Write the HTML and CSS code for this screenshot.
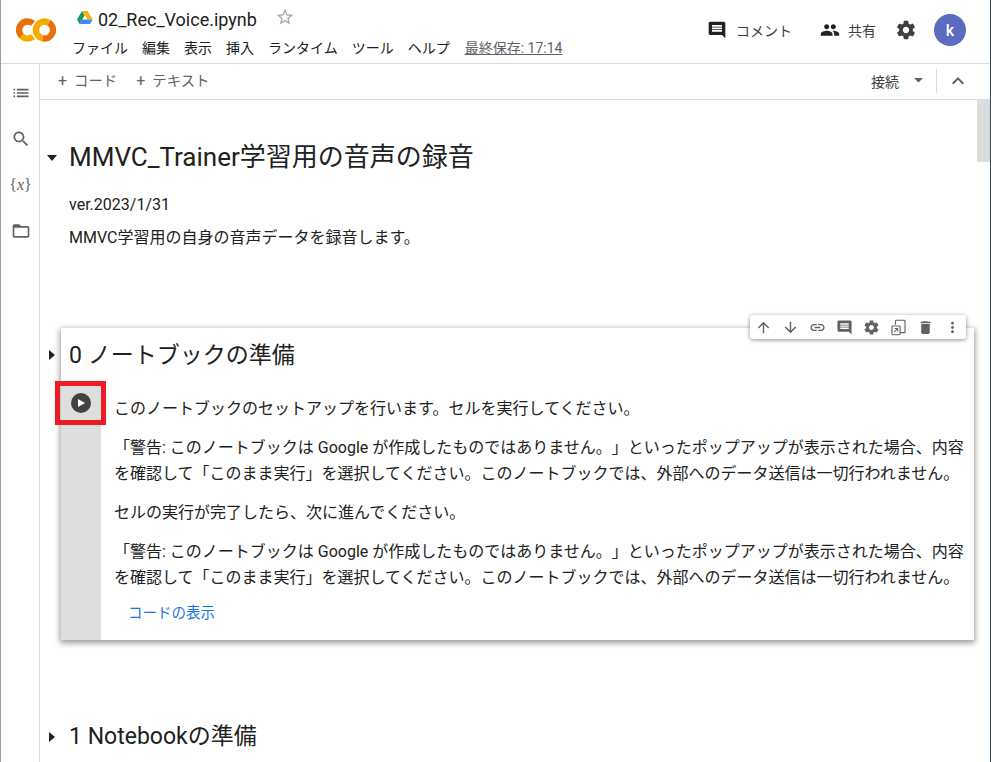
FILE: index.html
```html
<!DOCTYPE html>
<html lang="ja">
<head>
<meta charset="utf-8">
<title>02_Rec_Voice.ipynb</title>
<link rel="stylesheet" href="styles.css">
</head>
<body>
<div class="app">
  <header class="header">
    <svg class="logo" viewBox="0 0 40 24" aria-hidden="true">
      <path class="ring-y" d="M5.49 18.01A8.5 8.5 0 0 0 16.96 18.51"/>
      <path class="ring-o" d="M16.96 5.49A8.5 8.5 0 0 0 5.49 18.01"/>
      <path class="ring-o" d="M26.5 20.26A8.5 8.5 0 0 0 32.75 4.64"/>
      <path class="ring-y" d="M32.75 4.64A8.5 8.5 0 1 0 26.5 20.26"/>
    </svg>
    <div class="title-block">
      <div class="title-row">
        <svg class="drive" viewBox="0 0 16 14" aria-hidden="true">
          <path fill="#0f9d58" d="M0 9.6 5 1l2.6 4.4L2.6 14z"/>
          <path fill="#f4b400" d="M5 1h5.6l5 8.6h-5.2z"/>
          <path fill="#4285f4" d="M2.6 14l2.5-4.4h10.5L13 14z"/>
        </svg>
        <span class="filename">02_Rec_Voice.ipynb</span>
        <svg class="star" viewBox="0 0 24 24" aria-hidden="true"><path d="M22 9.24l-7.19-.62L12 2 9.19 8.63 2 9.24l5.46 4.73L5.82 21 12 17.27 18.18 21l-1.63-7.03L22 9.24zM12 15.4l-3.76 2.27 1-4.28-3.32-2.88 4.38-.38L12 6.1l1.71 4.04 4.38.38-3.32 2.88 1 4.28L12 15.4z"/></svg>
      </div>
      <nav class="menu">
        <span>ファイル</span><span>編集</span><span>表示</span><span>挿入</span><span>ランタイム</span><span>ツール</span><span>ヘルプ</span><span class="saved">最終保存: 17:14</span>
      </nav>
    </div>
    <div class="header-actions">
      <div class="action">
        <svg class="icon" viewBox="0 0 24 24" aria-hidden="true"><path d="M21.99 4c0-1.1-.89-2-1.99-2H4c-1.1 0-2 .9-2 2v12c0 1.1.9 2 2 2h14l4 4-.01-18zM18 14H6v-2h12v2zm0-3H6V9h12v2zm0-3H6V6h12v2z"/></svg>
        <span>コメント</span>
      </div>
      <div class="action share">
        <svg class="icon" viewBox="0 0 24 24" aria-hidden="true"><path d="M16 11c1.66 0 2.99-1.34 2.99-3S17.66 5 16 5c-1.66 0-3 1.34-3 3s1.34 3 3 3zm-8 0c1.66 0 2.99-1.34 2.99-3S9.66 5 8 5C6.34 5 5 6.34 5 8s1.34 3 3 3zm0 2c-2.33 0-7 1.17-7 3.5V19h14v-2.5c0-2.33-4.67-3.5-7-3.5zm8 0c-.29 0-.62.02-.97.05 1.16.84 1.97 1.97 1.97 3.45V19h6v-2.5c0-2.33-4.67-3.5-7-3.5z"/></svg>
        <span>共有</span>
      </div>
      <svg class="icon gear" viewBox="0 0 24 24" aria-hidden="true"><path d="M19.43 12.98c.04-.32.07-.64.07-.98s-.03-.66-.07-.98l2.11-1.65c.19-.15.24-.42.12-.64l-2-3.46c-.12-.22-.39-.3-.61-.22l-2.49 1c-.52-.4-1.08-.73-1.69-.98l-.38-2.65C14.46 2.18 14.25 2 14 2h-4c-.25 0-.46.18-.49.42l-.38 2.65c-.61.25-1.17.59-1.69.98l-2.49-1c-.23-.09-.49 0-.61.22l-2 3.46c-.13.22-.07.49.12.64l2.11 1.65c-.04.32-.07.65-.07.98s.03.66.07.98l-2.11 1.65c-.19.15-.24.42-.12.64l2 3.46c.12.22.39.3.61.22l2.49-1c.52.4 1.08.73 1.69.98l.38 2.65c.03.24.24.42.49.42h4c.25 0 .46-.18.49-.42l.38-2.65c.61-.25 1.17-.59 1.69-.98l2.49 1c.23.09.49 0 .61-.22l2-3.46c.12-.22.07-.49-.12-.64l-2.11-1.65zM12 15.5c-1.93 0-3.5-1.57-3.5-3.5s1.57-3.5 3.5-3.5 3.5 1.57 3.5 3.5-1.57 3.5-3.5 3.5z"/></svg>
      <div class="avatar">k</div>
    </div>
  </header>

  <div class="main">
    <aside class="rail">
      <svg class="rail-icon" viewBox="0 0 24 24" aria-hidden="true"><path d="M3 13h2v-2H3v2zm0 4h2v-2H3v2zm0-8h2V7H3v2zm4 4h14v-2H7v2zm0 4h14v-2H7v2zM7 7v2h14V7H7z"/></svg>
      <svg class="rail-icon" viewBox="0 0 24 24" aria-hidden="true"><path d="M15.5 14h-.79l-.28-.27C15.41 12.59 16 11.11 16 9.5 16 5.91 13.09 3 9.5 3S3 5.91 3 9.5 5.91 16 9.5 16c1.61 0 3.09-.59 4.23-1.57l.27.28v.79l5 4.99L20.49 19l-4.99-5zm-6 0C7.01 14 5 11.99 5 9.5S7.01 5 9.5 5 14 7.01 14 9.5 11.99 14 9.5 14z"/></svg>
      <span class="rail-var">{<i>x</i>}</span>
      <svg class="rail-icon" viewBox="0 0 24 24" aria-hidden="true"><path d="M20 6h-8l-2-2H4c-1.1 0-1.99.9-1.99 2L2 18c0 1.1.9 2 2 2h16c1.1 0 2-.9 2-2V8c0-1.1-.9-2-2-2zm0 12H4V8h16v10z"/></svg>
    </aside>

    <div class="workspace">
      <div class="toolbar">
        <span class="add"><b>+</b>コード</span>
        <span class="add"><b>+</b>テキスト</span>
        <div class="toolbar-right">
          <span class="connect">接続</span>
          <svg class="caret" viewBox="0 0 10 5" aria-hidden="true"><path d="M0 0h10L5 5z"/></svg>
          <span class="divider"></span>
          <svg class="chevron" viewBox="0 0 24 24" aria-hidden="true"><path d="M7.41 15.41 12 10.83l4.59 4.58L18 14l-6-6-6 6z"/></svg>
        </div>
      </div>

      <div class="scroller">
        <main class="notebook">
          <section class="intro">
            <h1 class="h1"><span class="tri-down"></span>MMVC_Trainer学習用の音声の録音</h1>
            <p class="intro-line">ver.2023/1/31</p>
            <p class="intro-line">MMVC学習用の自身の音声データを録音します。</p>
          </section>

          <div class="cell-wrap">
            <div class="cell-tools">
              <svg viewBox="0 0 24 24" aria-hidden="true"><path d="M4 12l1.41 1.41L11 7.83V20h2V7.83l5.58 5.59L20 12l-8-8-8 8z"/></svg>
              <svg viewBox="0 0 24 24" aria-hidden="true"><path d="M20 12l-1.41-1.41L13 16.17V4h-2v12.17l-5.58-5.59L4 12l8 8 8-8z"/></svg>
              <svg viewBox="0 0 24 24" aria-hidden="true"><path d="M3.9 12c0-1.71 1.39-3.1 3.1-3.1h4V7H7c-2.76 0-5 2.24-5 5s2.24 5 5 5h4v-1.9H7c-1.71 0-3.1-1.39-3.1-3.1zM8 13h8v-2H8v2zm9-6h-4v1.9h4c1.71 0 3.1 1.39 3.1 3.1s-1.39 3.1-3.1 3.1h-4V17h4c2.76 0 5-2.24 5-5s-2.24-5-5-5z"/></svg>
              <svg viewBox="0 0 24 24" aria-hidden="true"><path d="M21.99 4c0-1.1-.89-2-1.99-2H4c-1.1 0-2 .9-2 2v12c0 1.1.9 2 2 2h14l4 4-.01-18zM18 14H6v-2h12v2zm0-3H6V9h12v2zm0-3H6V6h12v2z"/></svg>
              <svg viewBox="0 0 24 24" aria-hidden="true"><path d="M19.43 12.98c.04-.32.07-.64.07-.98s-.03-.66-.07-.98l2.11-1.65c.19-.15.24-.42.12-.64l-2-3.46c-.12-.22-.39-.3-.61-.22l-2.49 1c-.52-.4-1.08-.73-1.69-.98l-.38-2.65C14.46 2.18 14.25 2 14 2h-4c-.25 0-.46.18-.49.42l-.38 2.65c-.61.25-1.17.59-1.69.98l-2.49-1c-.23-.09-.49 0-.61.22l-2 3.46c-.13.22-.07.49.12.64l2.11 1.65c-.04.32-.07.65-.07.98s.03.66.07.98l-2.11 1.65c-.19.15-.24.42-.12.64l2 3.46c.12.22.39.3.61.22l2.49-1c.52.4 1.08.73 1.69.98l.38 2.65c.03.24.24.42.49.42h4c.25 0 .46-.18.49-.42l.38-2.65c.61-.25 1.17-.59 1.69-.98l2.49 1c.23.09.49 0 .61-.22l2-3.46c.12-.22.07-.49-.12-.64l-2.11-1.65zM12 15.5c-1.93 0-3.5-1.57-3.5-3.5s1.57-3.5 3.5-3.5 3.5 1.57 3.5 3.5-1.57 3.5-3.5 3.5z"/></svg>
              <svg viewBox="0 0 24 24" aria-hidden="true"><path d="M9 1a2 2 0 0 0-2 2v5h1.6V2.6H20a.4.4 0 0 1 .4.4v15.4H15V20h5.4a1.6 1.6 0 0 0 1.6-1.6V3a2 2 0 0 0-2-2H9zM4 9a2 2 0 0 0-2 2v10a2 2 0 0 0 2 2h9a2 2 0 0 0 2-2V11a2 2 0 0 0-2-2H4zm0 1.6h9a.4.4 0 0 1 .4.4v10a.4.4 0 0 1-.4.4H4a.4.4 0 0 1-.4-.4V11a.4.4 0 0 1 .4-.4zM6.2 19l4-4v2.6h1.3v-4.9H6.6V14h2.7l-4 4z"/></svg>
              <svg viewBox="0 0 24 24" aria-hidden="true"><path d="M6 19c0 1.1.9 2 2 2h8c1.1 0 2-.9 2-2V7H6v12zM19 4h-3.5l-1-1h-5l-1 1H5v2h14V4z"/></svg>
              <svg viewBox="0 0 24 24" aria-hidden="true"><path d="M12 8c1.1 0 2-.9 2-2s-.9-2-2-2-2 .9-2 2 .9 2 2 2zm0 2c-1.1 0-2 .9-2 2s.9 2 2 2 2-.9 2-2-.9-2-2-2zm0 6c-1.1 0-2 .9-2 2s.9 2 2 2 2-.9 2-2-.9-2-2-2z"/></svg>
            </div>
            <span class="tri-right outer"></span>
            <article class="cell">
              <h2 class="h2">0 ノートブックの準備</h2>
              <div class="cell-body">
                <div class="gutter">
                  <div class="run-mark">
                    <span class="run-btn"><span class="run-tri"></span></span>
                  </div>
                </div>
                <div class="cell-text">
                  <p>このノートブックのセットアップを行います。セルを実行してください。</p>
                  <p>「警告: このノートブックは Google が作成したものではありません。」といったポップアップが表示された場合、内容を確認して「このまま実行」を選択してください。このノートブックでは、外部へのデータ送信は一切行われません。</p>
                  <p>セルの実行が完了したら、次に進んでください。</p>
                  <p>「警告: このノートブックは Google が作成したものではありません。」といったポップアップが表示された場合、内容を確認して「このまま実行」を選択してください。このノートブックでは、外部へのデータ送信は一切行われません。</p>
                  <a class="show-code">コードの表示</a>
                </div>
              </div>
            </article>
          </div>

          <section class="next">
            <span class="tri-right"></span>
            <h2 class="h2 next-title">1 Notebookの準備</h2>
          </section>
        </main>
        <div class="scrollbar"><div class="thumb"></div></div>
      </div>
    </div>
  </div>
</div>
</body>
</html>
```

FILE: styles.css
```css
* { box-sizing: border-box; }
html, body { margin: 0; height: 100%; overflow: hidden; }
body {
  background: #fff;
  color: #212121;
  font-family: Roboto, "Noto Sans CJK JP", sans-serif;
  text-spacing-trim: space-all;
}
p, h1, h2 { margin: 0; font-weight: 400; }
.app { width: 991px; height: 762px; display: flex; flex-direction: column; border-left: 1px solid #9a9fa3; border-right: 1px solid #3a4a55; }

.header { height: 64px; flex: none; display: flex; border-bottom: 1px solid #dadce0; padding-left: 15px; }
.logo { width: 40px; height: 24px; margin-top: 18px; flex: none; }
.ring-y { fill: none; stroke: #f9ab00; stroke-width: 6.4; }
.ring-o { fill: none; stroke: #e8710a; stroke-width: 6.4; }
.title-block { margin-left: 16px; padding-top: 8px; }
.title-row { display: flex; align-items: center; height: 22px; padding-left: 5px; }
.drive { width: 16px; height: 14px; margin-right: 5px; margin-top: -4px; }
.filename { font-size: 18px; color: #212121; }
.star { width: 20px; height: 20px; margin-left: 18px; margin-top: -4px; fill: #a8a8a8; }
.menu { display: flex; gap: 14px; margin-top: 8px; font-size: 14px; line-height: 20px; color: #212121; }
.saved { color: #5f6368; text-decoration: underline; margin-left: 1px; }
.header-actions { margin-left: auto; display: flex; align-items: center; padding-right: 24px; padding-bottom: 3px; font-size: 14px; color: #3c4043; }
.action { display: flex; align-items: center; gap: 8px; }
.action:first-child { gap: 9px; }
.share { margin-left: 28px; gap: 8px; }
.icon { width: 20px; height: 20px; fill: #212121; flex: none; }
.gear { width: 22px; height: 22px; margin-left: 19px; fill: #3c4043; }
.avatar { width: 32px; height: 32px; margin-left: 17px; border-radius: 50%; background: #5c6bc0; color: #fff; display: flex; align-items: center; justify-content: center; font-size: 16px; font-weight: 500; }

.main { flex: 1; display: flex; min-height: 0; }
.rail { width: 39px; flex: none; border-right: 1px solid #dadce0; display: flex; flex-direction: column; align-items: center; padding-top: 19px; padding-left: 1px; }
.rail-icon { width: 20px; height: 20px; fill: #616161; margin-bottom: 26px; flex: none; }
.rail-var { height: 20px; margin: 0 0 26px; font-family: "Liberation Serif", serif; font-size: 16px; line-height: 20px; color: #616161; }

.workspace { flex: 1; min-width: 0; display: flex; flex-direction: column; }
.toolbar { height: 36px; flex: none; display: flex; align-items: center; border-bottom: 1px solid #dadce0; padding-left: 18px; padding-bottom: 5px; font-size: 14.4px; color: #5f6368; }
.add { margin-right: 18px; }
.add + .add { margin-left: 1px; }
.add b { font-weight: 400; font-size: 16px; margin-right: 7px; }
.toolbar-right { margin-left: auto; display: flex; align-items: center; padding-right: 20px; padding-top: 3px; }
.connect { color: #3c4043; font-size: 14px; }
.caret { width: 9px; height: 4.5px; fill: #5f6368; margin-left: 15px; }
.divider { width: 1px; height: 24px; background: #dadce0; margin: 0 5px 0 13px; }
.chevron { width: 24px; height: 24px; fill: #5f6368; margin-left: 4px; }

.scroller { flex: 1; min-height: 0; display: flex; overflow: hidden; }
.notebook { flex: 1; min-width: 0; }
.scrollbar { width: 13px; flex: none; background: #fff; }
.thumb { height: 62px; background: #dcdcdc; }

.intro { padding: 40px 0 0 29px; position: relative; }
.h1 { font-size: 26px; line-height: 34px; color: #212121; }
.tri-down { position: absolute; left: 7px; top: 55px; border: 5px solid transparent; border-top: 6px solid #212121; border-bottom: 0; }
.intro-line { font-size: 16px; line-height: 20px; color: #212121; }
.h1 + .intro-line { margin-top: 21px; }
.intro-line + .intro-line { margin-top: 13px; }

.cell-wrap { position: relative; margin: 80px 3px 0 21px; }
.cell { background: #fff; height: 312px; box-shadow: 0 2px 6px 1px rgba(0,0,0,.4); display: flex; flex-direction: column; }
.cell-tools { position: absolute; z-index: 2; right: 8px; top: -13px; width: 216px; height: 24px; padding: 0; display: flex; align-items: center; justify-content: space-around; background: #fff; border-radius: 3px; box-shadow: 0 1px 4px rgba(0,0,0,.45); }
.cell-tools svg { width: 17px; height: 17px; fill: #616161; }
.tri-right { display: block; border: 5px solid transparent; border-left: 6px solid #212121; border-right: 0; width: 0; height: 0; }
.outer { position: absolute; left: -12px; top: 22px; }
.h2 { font-size: 23px; line-height: 30px; padding: 13px 0 0 8px; height: 53px; color: #212121; flex: none; }
.cell-body { flex: 1; display: flex; min-height: 0; }
.gutter { width: 40px; flex: none; background: #dedede; }
.run-mark { width: 51px; height: 44px; margin: 0 0 0 -6px; border: 5px solid #ed1c24; display: flex; align-items: center; justify-content: center; }
.run-btn { width: 20px; height: 20px; border-radius: 50%; background: #424242; display: flex; align-items: center; justify-content: center; }
.run-tri { border: 4px solid transparent; border-left: 7px solid #fff; border-right: 0; margin-left: 2px; }
.cell-text { flex: 1; padding: 15px 6px 0 13px; font-size: 16px; line-height: 26px; color: #212121; }
.cell-text p { margin-bottom: 13px; }
.show-code { display: block; margin: 1px 0 0 14px; font-size: 14.5px; line-height: 20px; color: #1a73e8; }

.next { position: relative; margin: 69px 0 0 21px; }
.next .tri-right { position: absolute; left: -12px; top: 23px; }
.next-title { height: auto; }
```
